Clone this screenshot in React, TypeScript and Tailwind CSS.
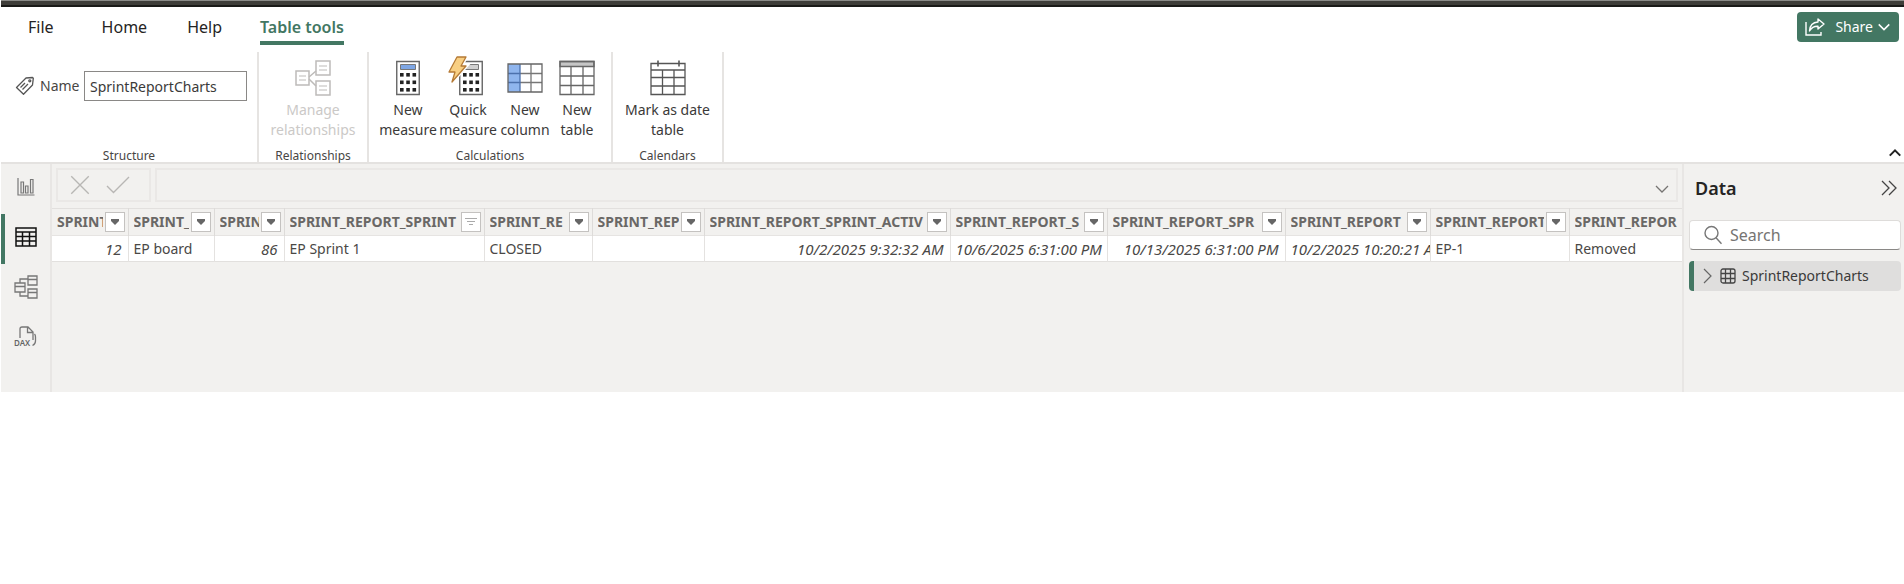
import type { ReactNode } from "react";

const columns = [
  { name: "SPRINT", value: "12", width: "w-[76px]", numeric: true },
  { name: "SPRINT_", value: "EP board", width: "w-[86px]" },
  { name: "SPRIN", value: "86", width: "w-[70px]", numeric: true },
  { name: "SPRINT_REPORT_SPRINT", value: "EP Sprint 1", width: "w-[200px]", sorted: true },
  { name: "SPRINT_RE", value: "CLOSED", width: "w-[108px]" },
  { name: "SPRINT_REP", value: "", width: "w-[112px]" },
  { name: "SPRINT_REPORT_SPRINT_ACTIV", value: "10/2/2025 9:32:32 AM", width: "w-[246px]", numeric: true },
  { name: "SPRINT_REPORT_S", value: "10/6/2025 6:31:00 PM", width: "w-[157px]", numeric: true },
  { name: "SPRINT_REPORT_SPR", value: "10/13/2025 6:31:00 PM", width: "w-[178px]", numeric: true },
  { name: "SPRINT_REPORT", value: "10/2/2025 10:20:21 A", width: "w-[145px]", numeric: true },
  { name: "SPRINT_REPORT", value: "EP-1", width: "w-[139px]" },
  { name: "SPRINT_REPOR", value: "Removed", width: "w-[180px]" },
];

function TagIcon() {
  return (
    <svg width="20" height="20" viewBox="0 0 20 20" fill="none" stroke="#555" strokeWidth="1.3">
      <path d="M1.5 11.5 11 2l6.500-.5.8.8L17.500 9 8.500 18.200z" strokeLinejoin="round" />
      <circle cx="14.800" cy="4.800" r="1" />
      <path d="m5.500 11.500 4.500-4.500M7.500 13.500l5.500-5.500" />
    </svg>
  );
}

function RelationIcon() {
  return (
    <svg width="36" height="36" viewBox="0 0 36 36" fill="none" stroke="#bdbbb9" strokeWidth="1.5">
      <path d="M1 11h13v14H1zM21 1h14v14H21zM21 21h14v14H21z" />
      <path d="M14 17 21 11M14 19l7 7" />
      <path d="M4 16h7M4 20h7M24 6h8M24 10h8M24 26h8M24 30h8" strokeWidth="1.2" />
    </svg>
  );
}

function CalculatorBody({ screen }: { screen: string }) {
  return (
    <>
      <path d="M.75 1.500h22.500v33H.75z" fill="#fff" stroke="#666" strokeWidth="1.4" />
      <path d="M4.500 4.500h15v5h-15z" fill={screen} stroke="#777" strokeWidth="1" />
      {[13, 20.5, 28].map((y) =>
        [4, 10.25, 16.5].map((x) => <rect key={`${x}-${y}`} x={x} y={y} width="3.6" height="3.6" fill="#222" />)
      )}
    </>
  );
}

function MeasureIcon() {
  return (
    <svg width="24" height="36" viewBox="0 0 24 36">
      <CalculatorBody screen="#7ea6e4" />
    </svg>
  );
}

function QuickMeasureIcon() {
  return (
    <svg width="38" height="40" viewBox="0 0 38 40" className="-mt-1 mr-2">
      <g transform="translate(14 4)">
        <CalculatorBody screen="#d0d0d0" />
      </g>
      <path d="M12 1h9l-5 9h5L7 26l3-10H4z" fill="#f8cf83" stroke="#fff" strokeWidth="4" />
      <path d="M12 1h9l-5 9h5L7 26l3-10H4z" fill="#f8cf83" stroke="#b57a35" strokeWidth="1.3" strokeLinejoin="round" />
    </svg>
  );
}

function ColumnIcon() {
  return (
    <svg width="36" height="36" viewBox="0 0 36 36" fill="none" stroke="#666" strokeWidth="1.3">
      <path d="M1 4h12v28H1z" fill="#8fb5ee" stroke="none" />
      <path d="M13 13.500h22M13 22.500h22M24 4v28" stroke="#777" />
      <path d="M1 13.500h12M1 22.500h12M13 4v28" stroke="#4c71ad" />
      <path d="M1 4h34v28H1z" />
    </svg>
  );
}

function NewTableIcon() {
  return (
    <svg width="36" height="36" viewBox="0 0 36 36" fill="none" stroke="#666" strokeWidth="1.3">
      <path d="M1 1.500h34v5H1z" fill="#c6c6c6" />
      <path d="M1 1.500h34v33H1zM1 16h34M1 25.500h34M12 6.500v28M24 6.500v28" />
    </svg>
  );
}

function CalendarIcon() {
  return (
    <svg width="36" height="36" viewBox="0 0 36 36" fill="none" stroke="#555" strokeWidth="1.3">
      <path d="M1 3.500h34v31H1zM1 10h34M1 17.500h34M1 26h34M12.500 10v24.500M24 10v24.500" />
      <path d="M8 .5v6M29 .5v6" strokeWidth="1.6" />
    </svg>
  );
}

function Chevron({ className, d = "m2 5 6 6 6-6", size = 16, stroke = 1.3 }: { className?: string; d?: string; size?: number; stroke?: number }) {
  return (
    <svg width={size} height={size} viewBox="0 0 16 16" fill="none" stroke="currentColor" strokeWidth={stroke} className={className}>
      <path d={d} />
    </svg>
  );
}

function RibbonButton({ icon, top, bottom, width, disabled }: { icon: ReactNode; top: string; bottom: string; width: string; disabled?: boolean }) {
  return (
    <button
      type="button"
      disabled={disabled}
      className={`${width} flex shrink-0 flex-col items-center text-sm leading-5 whitespace-nowrap ${disabled ? "text-[#cbc9c7]" : "text-[#3b3a39]"}`}
    >
      <span className="flex h-9 items-end justify-center">{icon}</span>
      <span className="mt-1">{top}</span>
      <span>{bottom}</span>
    </button>
  );
}

function RibbonGroup({ label, width, children }: { label: string; width: string; children: ReactNode }) {
  return (
    <section className={`${width} flex shrink-0 flex-col justify-between border-r-2 border-[#e6e4e2]`}>
      <div className="flex justify-center pt-2">{children}</div>
      <h2 className="text-center text-xs leading-3 text-[#484644]">{label}</h2>
    </section>
  );
}

function RailButton({ label, active, children }: { label: string; active?: boolean; children: ReactNode }) {
  return (
    <button
      type="button"
      aria-label={label}
      className={`flex h-[50px] w-full items-center justify-center border-l-4 pr-1 pb-1 ${active ? "border-[#437763]" : "border-transparent"}`}
    >
      {children}
    </button>
  );
}

function ViewRail() {
  return (
    <nav className="w-[51px] shrink-0 border-r-2 border-[#e8e6e4]">
      <RailButton label="Report view">
        <svg width="18" height="18" viewBox="0 0 18 18" fill="none" stroke="#777" strokeWidth="1.2">
          <path d="M1 0v17h16.500M4 15V4h2.500v11zM8.500 15V8H11v7zM13.500 15V1.500H16V15z" />
        </svg>
      </RailButton>
      <RailButton label="Table view" active>
        <svg width="22" height="20" viewBox="0 0 22 20" fill="none" stroke="#111" strokeWidth="1.5">
          <path d="M1 1h20v18H1zM1 5h20M1 9.500h20M1 14h20M7.500 5v14M14.500 5v14" />
        </svg>
      </RailButton>
      <RailButton label="Model view">
        <svg width="24" height="24" viewBox="0 0 24 24" fill="none" stroke="#777" strokeWidth="1.3">
          <path d="M1 8h10v9H1zM1 11.500h10M14 1h9v9h-9zM14 4.500h9M14 14h9v9h-9zM14 17.500h9M6 8V4h8M6 17v4h8" />
        </svg>
      </RailButton>
      <RailButton label="DAX query view">
        <svg width="24" height="22" viewBox="0 0 24 22" fill="none" stroke="#777" strokeWidth="1.3">
          <path d="M6 12V3q0-2 2-2h6l5 5v8M13.500 1v5.500H19M20.500 8q1 1 1 3v4q0 3-3 4.500" />
          <text x="0" y="20" fontSize="8" fontFamily="Noto Sans" fontWeight="600" fill="#666" stroke="none">DAX</text>
        </svg>
      </RailButton>
    </nav>
  );
}

function FormulaBar() {
  return (
    <div className="flex h-11 gap-1 pt-1 pr-1 pb-1.5 pl-1">
      <div className="flex w-[95px] shrink-0 items-center gap-4 border-2 border-[#eae8e6] pl-3 text-[#b8b6b4]">
        <button type="button" aria-label="Cancel">
          <Chevron size={20} stroke={1.1} d="m1 1 14 14M15 1 1 15" />
        </button>
        <button type="button" aria-label="Commit">
          <svg width="24" height="18" viewBox="0 0 24 18" fill="none" stroke="currentColor" strokeWidth="1.4">
            <path d="m1 10 6.500 6.500L23 1" />
          </svg>
        </button>
      </div>
      <div className="flex min-w-0 flex-1 items-center border-2 border-[#eae8e6] pr-1.5">
        <input aria-label="Formula" className="h-full min-w-0 flex-1 bg-transparent outline-none" />
        <button type="button" aria-label="Expand formula bar" className="mt-2 text-[#767472]">
          <Chevron />
        </button>
      </div>
    </div>
  );
}

function DataGrid() {
  return (
    <table className="w-[1697px] table-fixed border-collapse border-y border-[#e2e0de] text-sm">
      <thead>
        <tr className="h-[27px]">
          {columns.map((col, index) => (
            <th key={index} className={`${col.width} overflow-hidden border-r border-[#dddbd9] p-0 text-left text-sm leading-5 font-bold text-[#6a6866]`}>
              <div className="flex items-center gap-0.5 pr-[3px] pl-[5px]">
                <span className="min-w-0 flex-1 overflow-hidden whitespace-nowrap">{col.name}</span>
                <button
                  type="button"
                  aria-label={`Filter ${col.name}`}
                  className="flex size-5 shrink-0 items-center justify-center border border-[#c4c2c0] bg-white"
                >
                  {col.sorted ? (
                    <svg width="12" height="10" viewBox="0 0 12 10" stroke="#aaa" strokeWidth="1">
                      <path d="M0 1.500h12M2 4.500h8M4 7.500h4" />
                    </svg>
                  ) : (
                    <svg width="8" height="7" viewBox="0 0 8 7" fill="#666">
                      <path d="M0 0h8v2L4 6 0 2z" />
                    </svg>
                  )}
                </button>
              </div>
            </th>
          ))}
        </tr>
      </thead>
      <tbody>
        <tr className="h-[26px] border-t border-[#e6e4e2] bg-white text-[#4a4846]">
          {columns.map((col, index) => (
            <td
              key={index}
              className={`overflow-hidden border-r border-[#e4e2e0] p-0 pl-[5px] leading-5 whitespace-nowrap ${col.numeric ? "pr-1.5 text-right text-[15px] italic" : ""}`}
            >
              {col.value}
            </td>
          ))}
        </tr>
      </tbody>
    </table>
  );
}

function DataPane() {
  return (
    <aside className="w-[222px] shrink-0 border-l-2 border-[#e8e6e4] pr-[3px] pl-[5px]">
      <div className="flex items-center justify-between pt-2.5 pr-1 pl-1.5">
        <h2 className="text-lg leading-7 font-semibold text-[#252423]">Data</h2>
        <button type="button" aria-label="Collapse pane" className="text-[#444]">
          <svg width="16" height="16" viewBox="0 0 16 16" fill="none" stroke="currentColor" strokeWidth="1.3">
            <path d="m1 1 7 7-7 7M8 1l7 7-7 7" />
          </svg>
        </button>
      </div>
      <label className="mt-[18px] flex h-[30px] items-center gap-2 rounded border border-[#dedcda] border-b-[#8a8886] bg-white pl-3.5">
        <svg width="18" height="20" viewBox="0 0 18 20" fill="none" stroke="#777" strokeWidth="1.4" className="shrink-0">
          <circle cx="7.500" cy="8" r="6.500" />
          <path d="m12 12.800 5.500 6" />
        </svg>
        <input
          type="text"
          aria-label="Search"
          placeholder="Search"
          className="min-w-0 flex-1 bg-transparent text-base leading-6 outline-none placeholder:text-[#767472]"
        />
      </label>
      <button
        type="button"
        className="mt-[11px] flex h-[30px] w-full items-center rounded border-l-[5px] border-[#437763] bg-[#dfdedd] pl-1.5 text-sm text-[#3b3a39]"
      >
        <Chevron d="m4 1 7 7-7 7" className="text-[#666]" stroke={1.2} />
        <svg width="16" height="16" viewBox="0 0 16 16" fill="none" stroke="#444" strokeWidth="1.300" className="mr-1.5 ml-1">
          <rect x="1" y="1" width="14" height="14" rx="2" />
          <path d="M5.500 1v14M10.500 1v14M1 5.500h14M1 10.500h14" />
        </svg>
        SprintReportCharts
      </button>
    </aside>
  );
}

export default function App() {
  return (
    <div className="min-h-screen bg-white pl-px font-['Noto_Sans',sans-serif]">
      <div className="h-[7px] border-t border-b-2 border-t-[#8b8b88] border-b-[#1a1a18] bg-[#3e3d39]" />

      {/* Tabs */}
      <header className="flex items-start justify-between pr-[5px]">
        <nav className="flex pl-[27px] text-base leading-6 text-[#252423]">
          <a href="#file" className="mr-12 pt-2">File</a>
          <a href="#home" className="mr-10 pt-2">Home</a>
          <a href="#help" className="mr-[38px] pt-2">Help</a>
          <a href="#table-tools" className="border-b-4 border-[#437763] pt-2 pb-0.5 font-semibold text-[#437763]">Table tools</a>
        </nav>
        <button type="button" className="mt-[5px] flex h-[30px] items-center rounded bg-[#437763] px-2 text-sm text-white">
          <svg width="20" height="18" viewBox="0 0 20 18" fill="none" stroke="currentColor" strokeWidth="1.400" className="mr-2.5">
            <path d="M1 4v13h15v-3" />
            <path d="M13 1l6 5-6 5V8.300Q7.500 8 4.500 13 5 4.500 13 4z" strokeLinejoin="round" />
          </svg>
          Share
          <Chevron className="ml-1" size={14} stroke={1.8} />
        </button>
      </header>

      {/* Ribbon */}
      <div className="flex h-[117px] items-end justify-between pr-0.5">
        <div className="flex h-[110px]">
          <RibbonGroup label="Structure" width="w-[258px]">
            <div className="flex w-full items-center pt-[11px] pl-3.5">
              <TagIcon />
              <label htmlFor="table-name" className="w-[49px] pl-[5px] text-sm text-[#484644]">Name</label>
              <input
                id="table-name"
                type="text"
                defaultValue="SprintReportCharts"
                className="h-[30px] w-[163px] border border-[#8a8886] px-[5px] text-sm text-[#3b3a39] outline-none"
              />
            </div>
          </RibbonGroup>
          <RibbonGroup label="Relationships" width="w-[110px]">
            <RibbonButton disabled icon={<RelationIcon />} top="Manage" bottom="relationships" width="w-[90px]" />
          </RibbonGroup>
          <RibbonGroup label="Calculations" width="w-[244px]">
            <RibbonButton icon={<MeasureIcon />} top="New" bottom="measure" width="w-[60px]" />
            <RibbonButton icon={<QuickMeasureIcon />} top="Quick" bottom="measure" width="w-[60px]" />
            <RibbonButton icon={<ColumnIcon />} top="New" bottom="column" width="w-[54px]" />
            <RibbonButton icon={<NewTableIcon />} top="New" bottom="table" width="w-[50px]" />
          </RibbonGroup>
          <RibbonGroup label="Calendars" width="w-[111px]">
            <RibbonButton icon={<CalendarIcon />} top="Mark as date" bottom="table" width="w-[90px]" />
          </RibbonGroup>
        </div>
        <button type="button" aria-label="Collapse ribbon" className="mb-0.5 text-[#222]">
          <Chevron d="m2 11 6-6 6 6" size={14} stroke={2.4} />
        </button>
      </div>

      {/* Workspace */}
      <div className="flex min-h-[230px] border-t-2 border-[#e4e2e0] bg-[#f2f1ef]">
        <ViewRail />
        <main className="min-w-0 flex-1 overflow-hidden">
          <FormulaBar />
          <DataGrid />
        </main>
        <DataPane />
      </div>
    </div>
  );
}
